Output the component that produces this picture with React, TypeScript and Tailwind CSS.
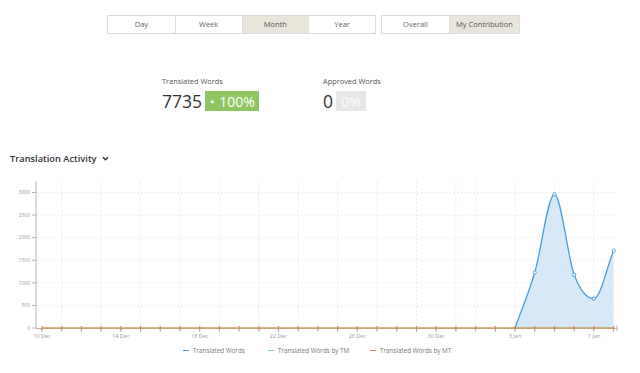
import type { ReactNode } from "react";

const FONT = { fontFamily: '"Open Sans", "Liberation Sans", sans-serif' };

const X0 = 42;
const DAY = 19.71;
const Y0 = 328;
const YS = 135.5 / 3000;

const DAYS = 30; // 10 Dec .. 8 Jan
const words = [1230, 2960, 1180, 650, 1715]; // 4 Jan .. 8 Jan

function xAt(i: number) {
  return X0 + i * DAY;
}
function yAt(v: number) {
  return Y0 - v * YS;
}

function monotonePath(pts: [number, number][]) {
  const n = pts.length;
  const dx: number[] = [];
  const m: number[] = [];
  for (let i = 0; i < n - 1; i++) {
    dx.push(pts[i + 1][0] - pts[i][0]);
    m.push((pts[i + 1][1] - pts[i][1]) / dx[i]);
  }
  const t: number[] = [m[0]];
  for (let i = 1; i < n - 1; i++) {
    if (m[i - 1] * m[i] <= 0) t.push(0);
    else t.push((m[i - 1] + m[i]) / 2);
  }
  t.push(m[n - 2]);
  let d = `M${pts[0][0]},${pts[0][1]}`;
  for (let i = 0; i < n - 1; i++) {
    const h = dx[i] / 3;
    d += ` C${pts[i][0] + h},${pts[i][1] + t[i] * h} ${pts[i + 1][0] - h},${pts[i + 1][1] - t[i + 1] * h} ${pts[i + 1][0]},${pts[i + 1][1]}`;
  }
  return d;
}

function Chart(): ReactNode {
  const pts: [number, number][] = [[xAt(24), Y0], ...words.map((w, i) => [xAt(25 + i), yAt(w)] as [number, number])];
  const line = monotonePath(pts);
  const area = `${line} L${xAt(29)},${Y0} L${xAt(24)},${Y0} Z`;
  // d3 style 2-day ticks, restarting each month
  const gridDays = [1, 3, 5, 7, 9, 11, 13, 15, 17, 19, 21, 22, 24, 26, 28];
  const labels = [
    [0, "10 Dec"], [4, "14 Dec"], [8, "18 Dec"], [12, "22 Dec"],
    [16, "26 Dec"], [20, "30 Dec"], [24, "3 Jan"], [28, "7 Jan"],
  ] as const;
  return (
    <svg width="640" height="168" viewBox="0 176 640 168" className="block">
      {[500, 1000, 1500, 2000, 2500, 3000].map((v) => (
        <line key={v} x1="37" x2="617" y1={yAt(v)} y2={yAt(v)} stroke="#ececec" strokeWidth="1" strokeDasharray="2 2" />
      ))}
      {gridDays.map((d) => (
        <line key={d} x1={xAt(d)} x2={xAt(d)} y1="182" y2={Y0} stroke="#ececec" strokeWidth="1" strokeDasharray="2 2" />
      ))}
      <path d={area} fill="#d7e9f7" />
      <path d={line} fill="none" stroke="#4a9fdc" strokeWidth="1.3" />
      {pts.slice(1).map(([x, y], i) => (
        <circle key={i} cx={x} cy={y} r="1.6" fill="#fff" stroke="#4a9fdc" strokeWidth="1" />
      ))}
      <line x1="36" x2="36" y1="181" y2={Y0} stroke="#b5b5b5" strokeWidth="1" />
      {[0, 500, 1000, 1500, 2000, 2500, 3000].map((v) => (
        <g key={v}>
          <line x1="32" x2="36" y1={yAt(v)} y2={yAt(v)} stroke="#b5b5b5" strokeWidth="1" />
          <text x="30" y={yAt(v) + 1.8} fontSize="5" fill="#9a9a9a" textAnchor="end" style={FONT}>
            {v}
          </text>
        </g>
      ))}
      <line x1="36" x2="617" y1={Y0 + 0.5} y2={Y0 + 0.5} stroke="#b5b5b5" strokeWidth="1" />
      <line x1="617" x2="617" y1={Y0 - 3} y2={Y0 + 3} stroke="#b5b5b5" strokeWidth="1" />
      <line x1={xAt(0)} x2={xAt(29)} y1={Y0} y2={Y0} stroke="#7fcf9f" strokeWidth="1.2" />
      <line x1={xAt(0)} x2={xAt(29)} y1={Y0} y2={Y0} stroke="#e8864f" strokeWidth="1.2" />
      {Array.from({ length: DAYS }, (_, i) => (
        <g key={i}>
          <line x1={xAt(i)} x2={xAt(i)} y1={Y0} y2={Y0 + 4} stroke="#b5b5b5" strokeWidth="1" />
          <line x1={xAt(i)} x2={xAt(i)} y1={Y0 - 2} y2={Y0 + 2} stroke="#e8864f" strokeWidth="1.2" />
        </g>
      ))}
      {labels.map(([d, l]) => (
        <text key={l} x={xAt(d)} y="338" fontSize="5.5" fill="#9a9a9a" textAnchor="middle" style={FONT}>
          {l}
        </text>
      ))}
    </svg>
  );
}

function Seg({ label, active, first }: { label: string; active?: boolean; first?: boolean }): ReactNode {
  return (
    <div
      className={`flex h-full items-center justify-center whitespace-nowrap ${first ? "" : "border-l border-[#dcdcdc]"} ${
        active ? "bg-[#e9e5da] text-[#555]" : "bg-white text-[#666]"
      }`}
    >
      {label}
    </div>
  );
}

export default function App(): ReactNode {
  return (
    <div className="h-[373px] w-[640px] overflow-hidden bg-white" style={FONT}>
      <div className="flex gap-[5px] pt-[15px] pl-[107px] text-[7.5px]">
        <div className="grid h-[19px] w-[269px] grid-cols-4 border border-[#dcdcdc]">
          <Seg label="Day" first />
          <Seg label="Week" />
          <Seg label="Month" active />
          <Seg label="Year" />
        </div>
        <div className="grid h-[19px] w-[139px] grid-cols-[67px_1fr] border border-[#dcdcdc]">
          <Seg label="Overall" first />
          <Seg label="My Contribution" active />
        </div>
      </div>

      <div className="mt-[41px] flex pl-[162px]">
        <div className="w-[161px]">
          <div className="text-[7.4px] leading-[12px] text-[#555]">Translated Words</div>
          <div className="mt-[4px] flex items-center gap-[3px]">
            <span className="text-[17.5px] leading-[20px] text-[#333]">7735</span>
            <span className="flex h-[20px] w-[54px] items-center justify-center gap-[4px] bg-[#8dc663] text-[14px] text-white">
              <span className="text-[6px]">▲</span>100%
            </span>
          </div>
        </div>
        <div>
          <div className="text-[7.4px] leading-[12px] text-[#555]">Approved Words</div>
          <div className="mt-[4px] flex items-center gap-[3px]">
            <span className="text-[17.5px] leading-[20px] text-[#333]">0</span>
            <span className="flex h-[20px] w-[30px] items-center justify-center bg-[#e6e6e6] text-[14px] text-[#fafafa]">
              0%
            </span>
          </div>
        </div>
      </div>

      <div className="mt-[41px] flex items-center gap-[5px] pl-[10px] text-[9.3px] font-semibold text-[#333]">
        Translation Activity
        <svg width="7" height="5" viewBox="0 0 8 6">
          <path d="M1 1.5 L4 4.5 L7 1.5" fill="none" stroke="#333" strokeWidth="1.8" />
        </svg>
      </div>

      <div className="mt-[10px]">
        <Chart />
      </div>

      <div className="mt-[2px] flex pl-[183px] text-[6.3px] text-[#777]">
        <div className="flex w-[85px] items-center gap-[4px]">
          <span className="h-px w-[6px] bg-[#4a9fdc]" />
          Translated Words
        </div>
        <div className="flex w-[102px] items-center gap-[4px]">
          <span className="h-px w-[6px] bg-[#7fcf9f]" />
          Translated Words by TM
        </div>
        <div className="flex items-center gap-[4px]">
          <span className="h-px w-[6px] bg-[#e8864f]" />
          Translated Words by MT
        </div>
      </div>
    </div>
  );
}
